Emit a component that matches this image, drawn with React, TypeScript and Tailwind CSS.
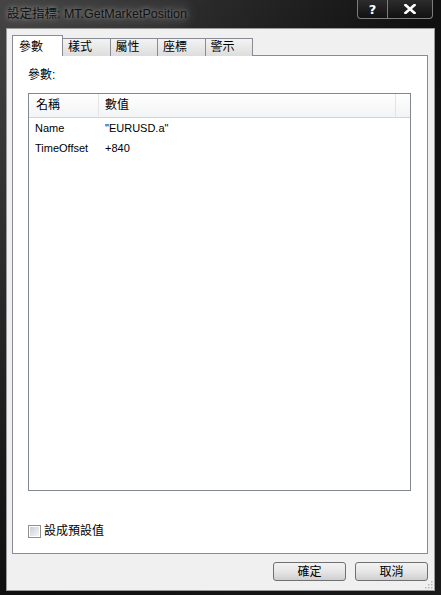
const UI_FONT = "font-['Liberation_Sans','Noto_Sans_CJK_TC',sans-serif]";

const TABS = ["參數", "樣式", "屬性", "座標", "警示"];

const PARAMS = [
  { name: "Name", value: '"EURUSD.a"' },
  { name: "TimeOffset", value: "+840" },
];

const CaptionButtons = () => (
  <div className="flex h-[19px] self-start mr-[8px]">
    <div className="w-[31px] h-full flex items-center justify-center border border-t-0 border-[#7d7d7d] rounded-bl-[4px] bg-gradient-to-b from-[#2c2c2c] to-[#121212]">
      <span className="text-white font-bold text-[13px] leading-none font-['DejaVu_Sans',sans-serif]">?</span>
    </div>
    <div className="w-[45px] h-full flex items-center justify-center border border-t-0 border-l-0 border-[#7d7d7d] rounded-br-[4px] bg-gradient-to-b from-[#2c2c2c] to-[#121212]">
      <svg width="12" height="10" viewBox="0 0 12 10">
        <path d="M1.5 1 L10.5 9 M10.5 1 L1.5 9" stroke="#fff" strokeWidth="2.6" strokeLinecap="square" />
      </svg>
    </div>
  </div>
);

const App = () => {
  return (
    <div className={`w-[441px] h-[595px] flex flex-col bg-gradient-to-br from-[#444] via-[#101010] to-[#1a1a1a] ${UI_FONT}`}>
      {/* Title bar */}
      <div className="h-[28px] flex justify-between items-start">
        <div className="ml-[7px] mt-[5px] rounded-[8px] bg-[#555]/30 shadow-[0_0_8px_4px_rgba(85,85,85,0.3)] text-[12.5px] text-[#111] [text-shadow:0_0_5px_rgba(200,200,200,0.8)]">
          設定指標: MT.GetMarketPosition
        </div>
        <CaptionButtons />
      </div>

      {/* Client area */}
      <div className="flex-1 mx-[6px] mb-[4px] border border-[#9a9a9a] bg-[#f0f0f0] flex flex-col pt-[6px] pl-[5px] pr-[6px] relative">
        {/* Tabs */}
        <div className="flex items-end h-[21px] relative z-10">
          {TABS.map((tab, i) =>
            i === 0 ? (
              <div
                key={tab}
                className="w-[51px] h-[21px] bg-white border border-b-0 border-[#898c95] pl-[6px] pt-[2px] text-[12px] text-black"
              >
                {tab}
              </div>
            ) : (
              <div
                key={tab}
                className="w-[47.5px] h-[18px] border border-l-0 border-b-0 border-[#898c95] bg-gradient-to-b from-[#f3f3f3] to-[#dddddd] pl-[5px] text-[12px] leading-[17px] text-black"
              >
                {tab}
              </div>
            )
          )}
        </div>

        {/* Tab panel */}
        <div className="-mt-px h-[499px] bg-white border border-[#898c95] flex flex-col pl-[15px] pr-[14px] pt-[11px]">
          <div className="text-[12px] text-black leading-[16px]">參數:</div>

          {/* List view */}
          <div className="mt-[10px] h-[398px] mr-[2px] border border-[#828790] flex flex-col">
            <div className="h-[24px] flex bg-gradient-to-b from-white to-[#f2f3f5] border-b border-[#d5d5d5] text-[12px] text-black">
              <div className="w-[70px] border-r border-[#e3e4e6] pl-[7px] leading-[23px]">名稱</div>
              <div className="flex-1 border-r border-[#e3e4e6] pl-[6px] leading-[23px]">數值</div>
              <div className="w-[14px]" />
            </div>
            {PARAMS.map((p) => (
              <div key={p.name} className="h-[20px] flex items-center text-[11px] text-black">
                <div className="w-[70px] pl-[6px]">{p.name}</div>
                <div className="pl-[6px]">{p.value}</div>
              </div>
            ))}
          </div>

          {/* Checkbox */}
          <div className="mt-[33px] flex items-center gap-[3px]">
            <div className="w-[13px] h-[13px] border border-[#8e8f8f] p-px bg-white">
              <div className="w-full h-full bg-gradient-to-br from-[#cbcfd5] to-[#f6f6f6]" />
            </div>
            <span className="text-[12px] text-black leading-[14px]">設成預設值</span>
          </div>
        </div>

        {/* Buttons */}
        <div className="flex justify-end gap-[9px] mt-[8px]">
          {["確定", "取消"].map((label) => (
            <div
              key={label}
              className="w-[73px] h-[19px] rounded-[3px] border border-[#707070] bg-gradient-to-b from-[#f2f2f2] via-[#e6e6e6] to-[#cfcfcf] flex items-center justify-center text-[12px] text-black"
            >
              {label}
            </div>
          ))}
        </div>

        {/* Resize grip */}
        <svg className="absolute right-[1px] bottom-[1px]" width="8" height="8" viewBox="0 0 8 8">
          {[
            [6, 0],
            [6, 3],
            [3, 3],
            [6, 6],
            [3, 6],
            [0, 6],
          ].map(([x, y], i) => (
            <rect key={i} x={x} y={y} width="1.5" height="1.5" fill="#b8b8b8" />
          ))}
        </svg>
      </div>
    </div>
  );
};

export default App;
